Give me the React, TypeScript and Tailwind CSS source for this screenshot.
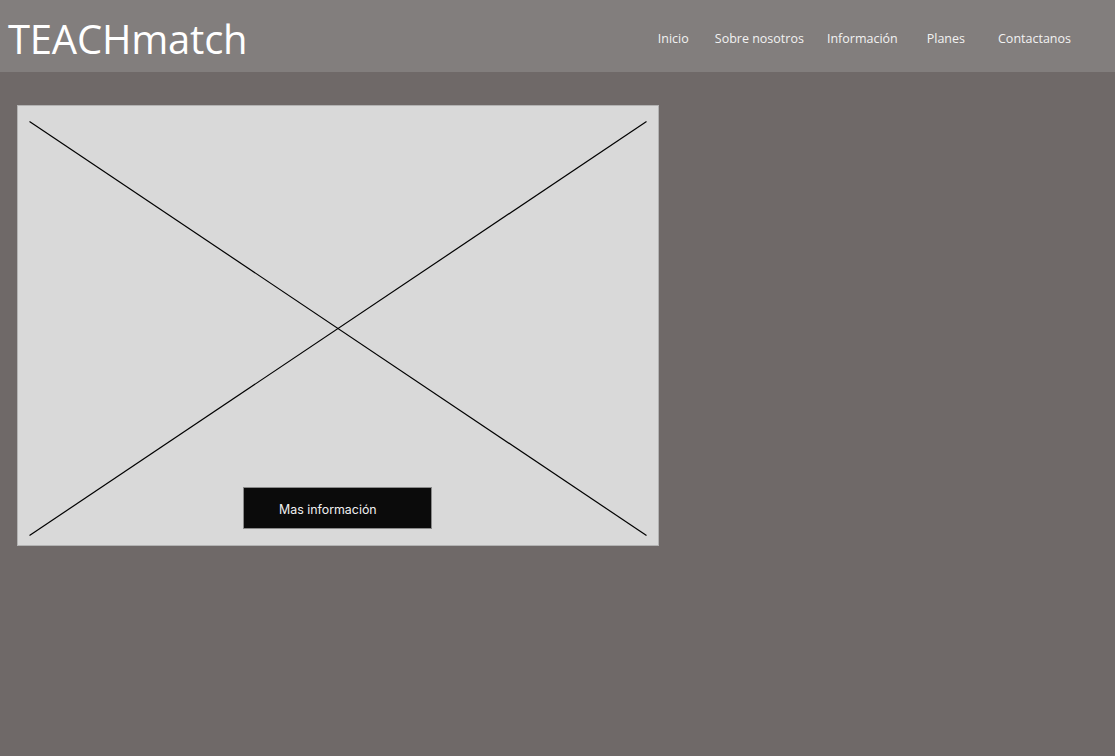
const navItems = [
  { label: "Inicio", cls: "" },
  { label: "Sobre nosotros", cls: "ml-[26px]" },
  { label: "Información", cls: "ml-[23px]" },
  { label: "Planes", cls: "ml-[29px]" },
  { label: "Contactanos", cls: "ml-[33px]" },
]

const App = () => {
  return (
    <div className="w-full min-h-[100vh] bg-[#6f6968] font-['Open_Sans',sans-serif]">
      <header className="flex flex-row items-center justify-between w-full h-[72px] pt-[6px] bg-[#827e7d]">
        <h1 className="ml-[8px] text-[40px] leading-none text-white tracking-[-0.2px]">TEACHmatch</h1>
        <nav className="flex flex-row items-center mr-[44px] pt-[1px] text-[12.5px] text-[#f2f2f2]">
          {navItems.map((item) => (
            <a key={item.label} className={item.cls}>
              {item.label}
            </a>
          ))}
        </nav>
      </header>
      <main className="pt-[33px] pl-[17px]">
        <div className="relative flex flex-col justify-end w-[642px] h-[441px] bg-[#d9d9d9] border border-[#b3b3b3] pl-[225px] pb-[16px]">
          <svg className="absolute inset-0" width="640" height="439" viewBox="0 0 640 439">
            <line x1="11.5" y1="15.5" x2="628.5" y2="429.5" stroke="#000" strokeWidth="1.2" />
            <line x1="11.5" y1="429.5" x2="628.5" y2="15.5" stroke="#000" strokeWidth="1.2" />
          </svg>
          <button className="relative flex items-center w-[189px] h-[42px] bg-[#0b0b0b] border border-[#8a8a8a] pl-[35px] pt-[4px] text-[12.4px] text-[#f0f0f0] font-['Inter',sans-serif]">
            Mas información
          </button>
        </div>
      </main>
    </div>
  )
}

export default App
